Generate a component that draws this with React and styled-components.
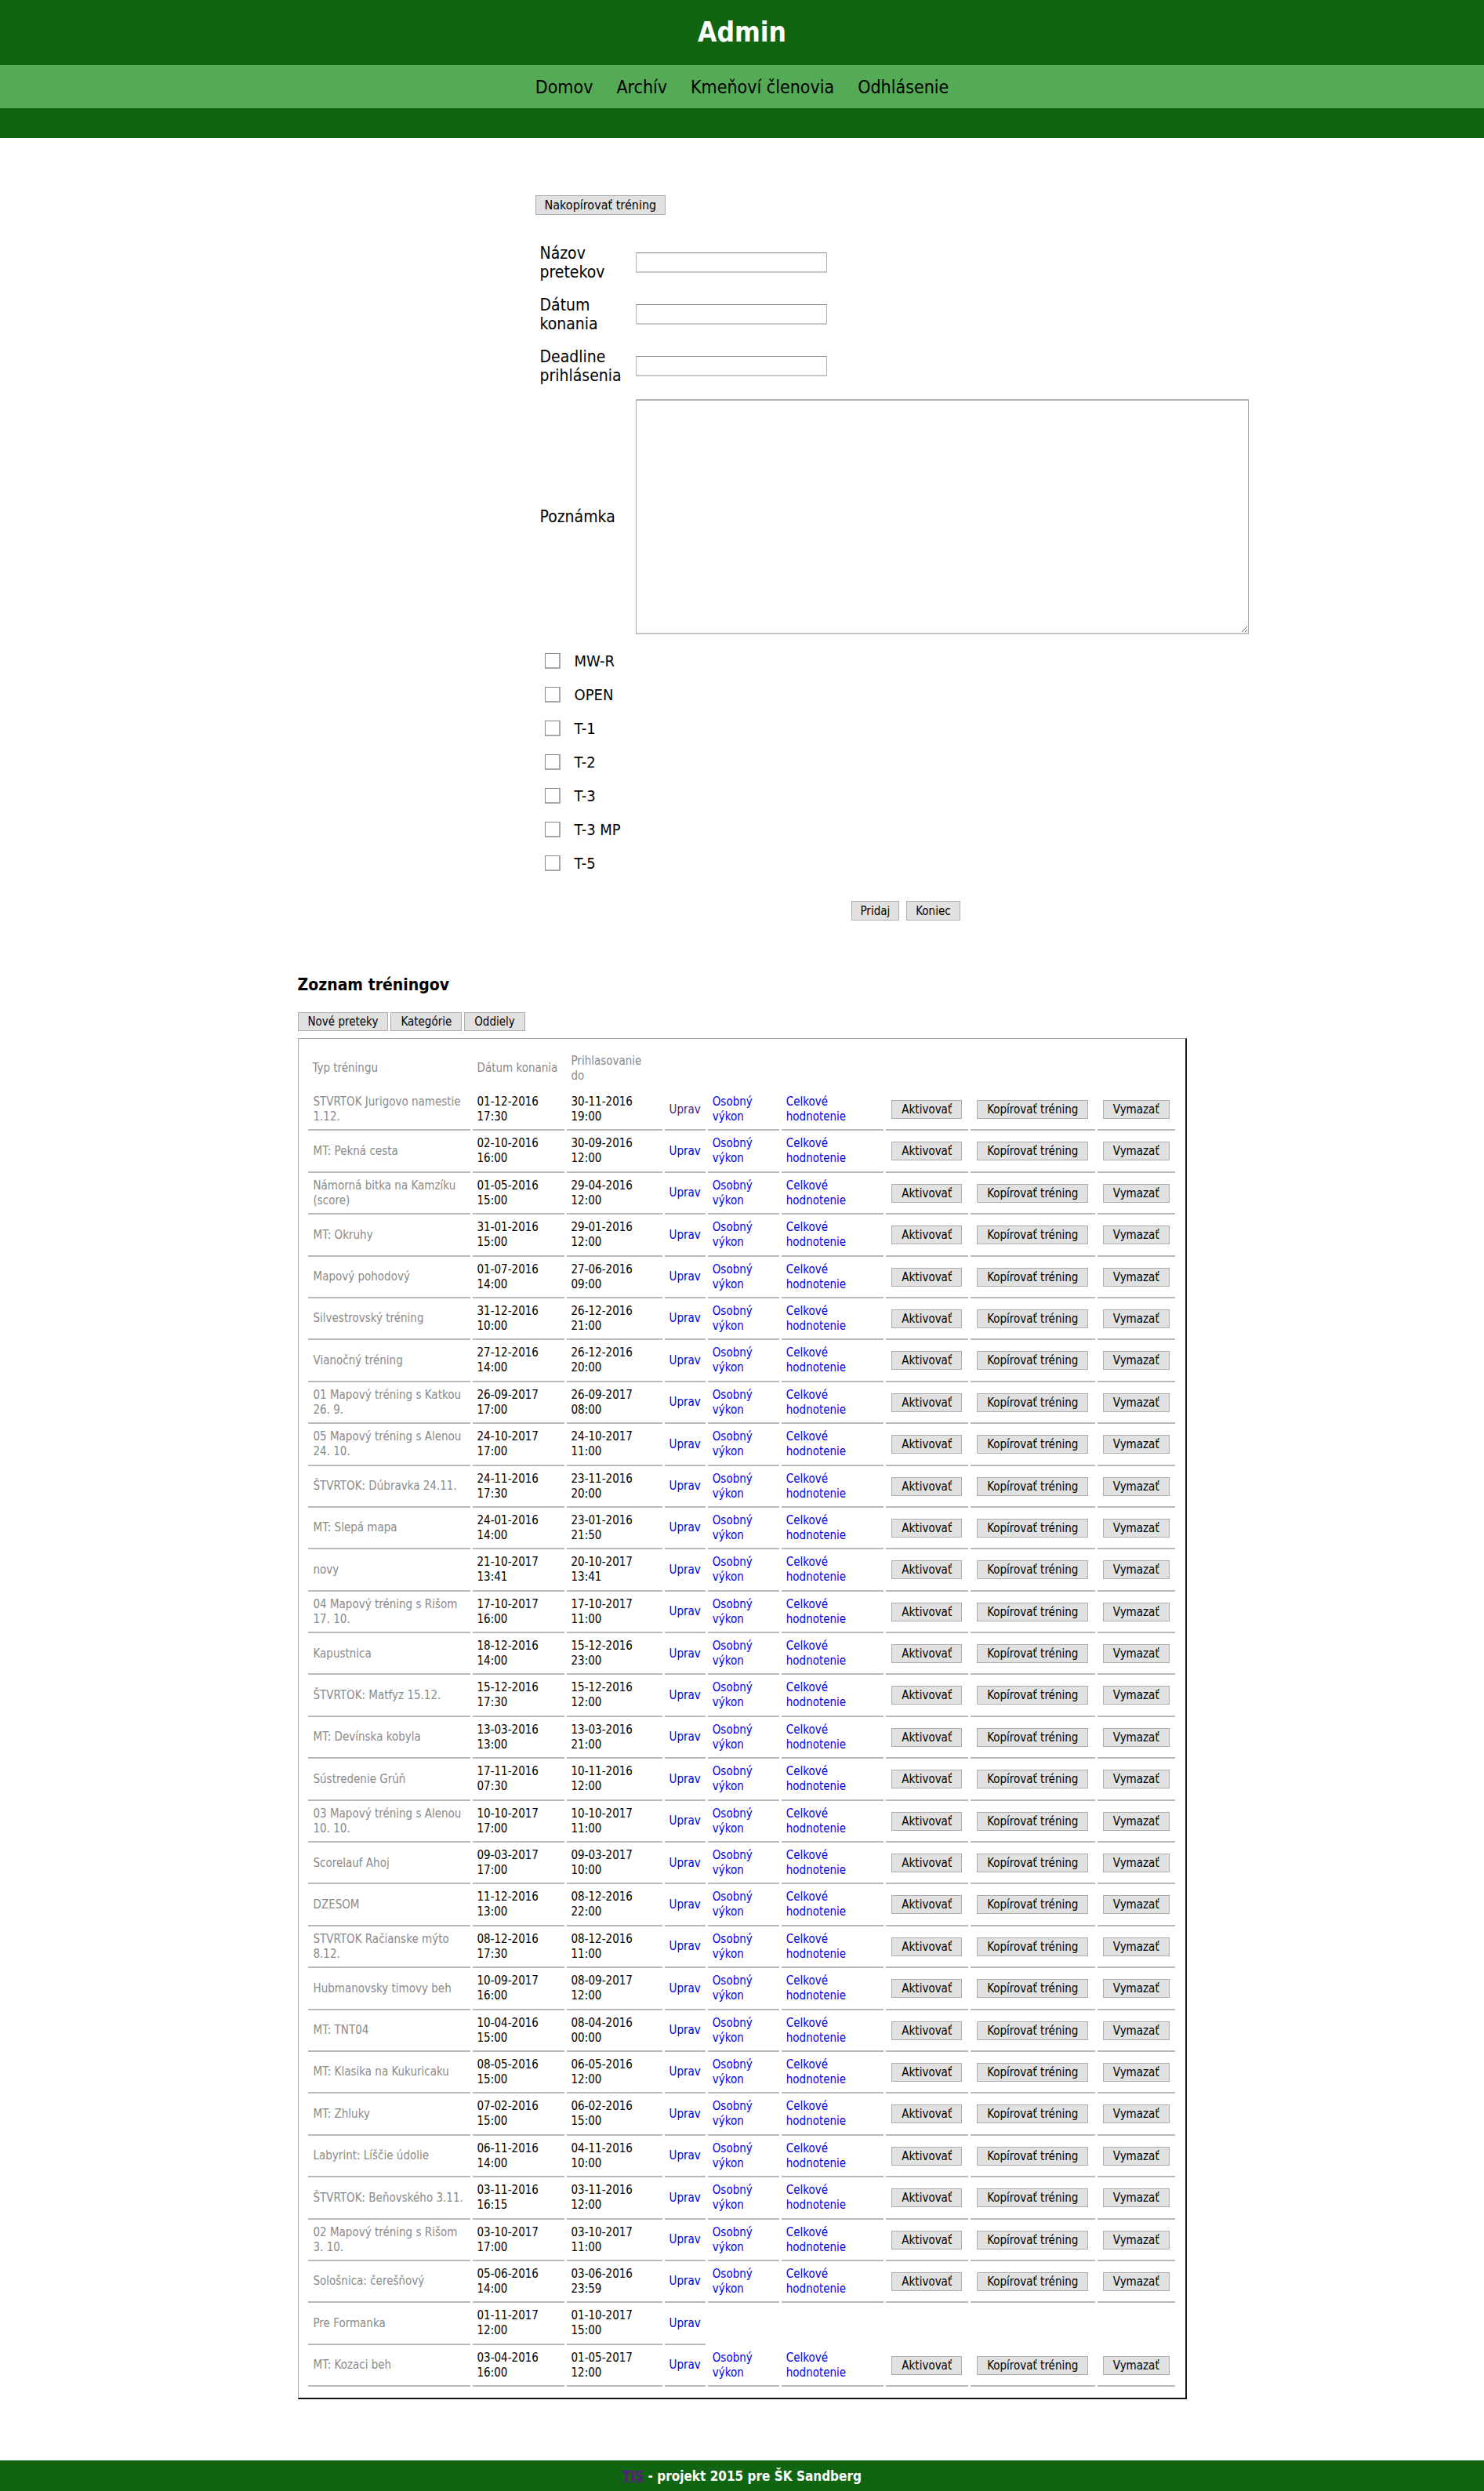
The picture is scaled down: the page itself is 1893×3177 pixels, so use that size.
import React from 'react';
import styled, { createGlobalStyle } from 'styled-components';

const GlobalStyle = createGlobalStyle`
  html, body { margin:0; padding:0; background:#fff; }
  body {
    font-family: "DejaVu Sans Condensed", "DejaVu Sans", sans-serif;
    font-stretch: condensed;
    color:#000;
  }
`;

const TRAININGS = [
  ['STVRTOK Jurigovo namestie 1.12.', '01-12-2016', '17:30', '30-11-2016', '19:00', true, true],
  ['MT: Pekná cesta', '02-10-2016', '16:00', '30-09-2016', '12:00', false, true],
  ['Námorná bitka na Kamzíku (score)', '01-05-2016', '15:00', '29-04-2016', '12:00', false, true],
  ['MT: Okruhy', '31-01-2016', '15:00', '29-01-2016', '12:00', false, true],
  ['Mapový pohodový', '01-07-2016', '14:00', '27-06-2016', '09:00', false, true],
  ['Silvestrovský tréning', '31-12-2016', '10:00', '26-12-2016', '21:00', false, true],
  ['Vianočný tréning', '27-12-2016', '14:00', '26-12-2016', '20:00', false, true],
  ['01 Mapový tréning s Katkou 26. 9.', '26-09-2017', '17:00', '26-09-2017', '08:00', false, true],
  ['05 Mapový tréning s Alenou 24. 10.', '24-10-2017', '17:00', '24-10-2017', '11:00', false, true],
  ['ŠTVRTOK: Dúbravka 24.11.', '24-11-2016', '17:30', '23-11-2016', '20:00', false, true],
  ['MT: Slepá mapa', '24-01-2016', '14:00', '23-01-2016', '21:50', false, true],
  ['novy', '21-10-2017', '13:41', '20-10-2017', '13:41', false, true],
  ['04 Mapový tréning s Rišom 17. 10.', '17-10-2017', '16:00', '17-10-2017', '11:00', false, true],
  ['Kapustnica', '18-12-2016', '14:00', '15-12-2016', '23:00', false, true],
  ['ŠTVRTOK: Matfyz 15.12.', '15-12-2016', '17:30', '15-12-2016', '12:00', false, true],
  ['MT: Devínska kobyla', '13-03-2016', '13:00', '13-03-2016', '21:00', false, true],
  ['Sústredenie Grúň', '17-11-2016', '07:30', '10-11-2016', '12:00', false, true],
  ['03 Mapový tréning s Alenou 10. 10.', '10-10-2017', '17:00', '10-10-2017', '11:00', false, true],
  ['Scorelauf Ahoj', '09-03-2017', '17:00', '09-03-2017', '10:00', false, true],
  ['DZESOM', '11-12-2016', '13:00', '08-12-2016', '22:00', false, true],
  ['STVRTOK Račianske mýto 8.12.', '08-12-2016', '17:30', '08-12-2016', '11:00', false, true],
  ['Hubmanovsky timovy beh', '10-09-2017', '16:00', '08-09-2017', '12:00', false, true],
  ['MT: TNT04', '10-04-2016', '15:00', '08-04-2016', '00:00', false, true],
  ['MT: Klasika na Kukuricaku', '08-05-2016', '15:00', '06-05-2016', '12:00', false, true],
  ['MT: Zhluky', '07-02-2016', '15:00', '06-02-2016', '15:00', false, true],
  ['Labyrint: Líščie údolie', '06-11-2016', '14:00', '04-11-2016', '10:00', false, true],
  ['ŠTVRTOK: Beňovského 3.11.', '03-11-2016', '16:15', '03-11-2016', '12:00', false, true],
  ['02 Mapový tréning s Rišom 3. 10.', '03-10-2017', '17:00', '03-10-2017', '11:00', false, true],
  ['Sološnica: čerešňový', '05-06-2016', '14:00', '03-06-2016', '23:59', false, true],
  ['Pre Formanka', '01-11-2017', '12:00', '01-10-2017', '15:00', false, false],
  ['MT: Kozaci beh', '03-04-2016', '16:00', '01-05-2017', '12:00', false, true],
];

const CATEGORIES = ['MW-R', 'OPEN', 'T-1', 'T-2', 'T-3', 'T-3 MP', 'T-5'];

export default function App() {
  return (
    <>
      <GlobalStyle />
      <Header>
        <Title>Admin</Title>
        <Nav>
          <NavLink href="#">Domov</NavLink>
          <NavLink href="#">Archív</NavLink>
          <NavLink href="#">Kmeňoví členovia</NavLink>
          <NavLink href="#">Odhlásenie</NavLink>
        </Nav>
        <HeaderBand />
      </Header>

      <Main>
        <FormSection>
          <Button $size={16}>Nakopírovať tréning</Button>
          <FormGrid>
            <Label>Názov pretekov</Label>
            <TextInput type="text" />
            <Label>Dátum konania</Label>
            <TextInput type="text" />
            <Label>Deadline prihlásenia</Label>
            <TextInput type="text" />
            <Label>Poznámka</Label>
            <Note />
          </FormGrid>
          <CheckList>
            {CATEGORIES.map((c) => (
              <CheckRow key={c}>
                <Check type="checkbox" />
                <span>{c}</span>
              </CheckRow>
            ))}
          </CheckList>
          <ActionRow>
            <Button>Pridaj</Button>
            <Button>Koniec</Button>
          </ActionRow>
        </FormSection>

        <ListTitle>Zoznam tréningov</ListTitle>
        <Tabs>
          <Button>Nové preteky</Button>
          <Button>Kategórie</Button>
          <Button $gap={6}>Oddiely</Button>
        </Tabs>
        <Box>
          <Table>
            <colgroup>
              <col style={{ width: 207 }} />
              <col style={{ width: 117 }} />
              <col style={{ width: 122 }} />
              <col style={{ width: 52 }} />
              <col style={{ width: 91 }} />
              <col style={{ width: 130 }} />
              <col style={{ width: 105 }} />
              <col style={{ width: 159 }} />
              <col style={{ width: 99 }} />
            </colgroup>
            <thead>
              <tr>
                <Th>Typ tréningu</Th>
                <Th>Dátum konania</Th>
                <Th>Prihlasovanie do</Th>
                <Th /><Th /><Th /><Th /><Th /><Th />
              </tr>
            </thead>
            <tbody>
              {TRAININGS.map(([name, d, t, dd, dt, visited, full]) => (
                <tr key={name}>
                  <NameCell>{name}</NameCell>
                  <Cell>{d}<br />{t}</Cell>
                  <Cell>{dd}<br />{dt}</Cell>
                  <Cell><Link href="#" $visited={visited}>Uprav</Link></Cell>
                  {full && (
                    <>
                      <Cell><Link href="#">Osobný<br />výkon</Link></Cell>
                      <Cell><Link href="#">Celkové<br />hodnotenie</Link></Cell>
                      <BtnCell><Button>Aktivovať</Button></BtnCell>
                      <BtnCell><Button>Kopírovať tréning</Button></BtnCell>
                      <BtnCell><Button>Vymazať</Button></BtnCell>
                    </>
                  )}
                </tr>
              ))}
            </tbody>
          </Table>
        </Box>
      </Main>

      <Footer>
        <FooterLink href="#">TIS</FooterLink> - projekt 2015 pre ŠK Sandberg
      </Footer>
    </>
  );
}

const Header = styled.header`
  background:#116511;
`
const Title = styled.h1`
  margin:0;
  height:83px;
  line-height:83px;
  text-align:center;
  color:#fff;
  font-size:35px;
  font-weight:bold;
`
const Nav = styled.nav`
  background:#55aa55;
  height:55px;
  display:flex;
  justify-content:center;
  align-items:center;
  gap:30px;
`
const NavLink = styled.a`
  color:#000;
  font-size:23px;
  text-decoration:none;
`
const HeaderBand = styled.div`
  height:38px;
`
const Main = styled.main`
  width:1134px;
  margin:0 auto;
  padding-top:73px;
`
const FormSection = styled.section`
  padding-left:303px;
`
const Button = styled.button`
  height:25px;
  padding:0 11px;
  margin-right:${({ $gap }) => ($gap ? `${$gap}px` : '0')};
  background:#e1e1e1;
  border:1px solid #adadad;
  border-radius:0;
  font-family:inherit;
  font-stretch:condensed;
  font-size:${({ $size }) => ($size ? `${$size}px` : '15px')};
  color:#000;
  cursor:pointer;
`
const FormGrid = styled.div`
  display:grid;
  grid-template-columns:128px 782px;
  row-gap:18px;
  align-items:center;
  margin-top:37px;
`
const Label = styled.div`
  padding-left:6px;
  padding-right:10px;
  font-size:21px;
  line-height:24px;
`
const TextInput = styled.input`
  box-sizing:border-box;
  width:244px;
  height:26px;
  border:1px solid #b4b4b4;
  border-top-color:#8a8a8a;
  border-bottom:2px solid #c8c8c8;
  padding:2px 4px;
  font-family:inherit;
`
const Note = styled.textarea`
  box-sizing:border-box;
  width:782px;
  height:300px;
  border:1px solid #a8a8a8;
  border-top:2px solid #b4b4b4;
  border-bottom:2px solid #c4c4c4;
  font-family:inherit;
`
const CheckList = styled.div`
  margin-top:12px;
  padding-left:12px;
`
const CheckRow = styled.label`
  display:flex;
  align-items:center;
  gap:18px;
  height:43px;
  font-size:20px;
`
const Check = styled.input`
  appearance:none;
  margin:0;
  width:20px;
  height:20px;
  box-sizing:border-box;
  border:1px solid #8a8a8a;
  border-bottom:2px solid #a8a8a8;
  border-right:2px solid #a8a8a8;
  background:#fff;
`
const ActionRow = styled.div`
  display:flex;
  gap:9px;
  margin-top:27px;
  padding-left:403px;
`
const ListTitle = styled.h2`
  margin:70px 0 0;
  font-size:21px;
  line-height:25px;
  font-weight:bold;
`
const Tabs = styled.div`
  display:flex;
  gap:3px;
  margin-top:22px;
  & > button { height:24px; padding:0 12px; }
`
const Box = styled.div`
  margin-top:9px;
  border-top:1px solid #a8a8a8;
  border-left:1px solid #a8a8a8;
  border-right:2px solid #1a1a1a;
  border-bottom:2px solid #111;
  padding:11px 9px 14px 9px;
`
const Table = styled.table`
  table-layout:fixed;
  border-collapse:separate;
  border-spacing:3px 0;
  font-size:15px;
  line-height:19px;
`
const Th = styled.th`
  height:53px;
  padding:0 6px;
  text-align:left;
  font-weight:normal;
  color:#8a8a8a;
`
const Cell = styled.td`
  padding:7px 6px 6.4px;
  border-bottom:2px solid #b8b8b8;
  vertical-align:middle;
`
const NameCell = styled(Cell)`
  padding-left:7px;
  color:#8a8a8a;
`
const BtnCell = styled(Cell)`
  text-align:center;
  padding-left:0;
  padding-right:0;
  & > button { height:24px; padding:0 12px; }
`
const Link = styled.a`
  color:${({ $visited }) => ($visited ? '#551a8b' : '#0000ee')};
  text-decoration:none;
`
const Footer = styled.footer`
  margin-top:78px;
  height:41px;
  line-height:41px;
  background:#116511;
  color:#fff;
  text-align:center;
  font-size:17px;
  font-weight:bold;
`
const FooterLink = styled.a`
  color:#551a8b;
  text-decoration:underline;
`
